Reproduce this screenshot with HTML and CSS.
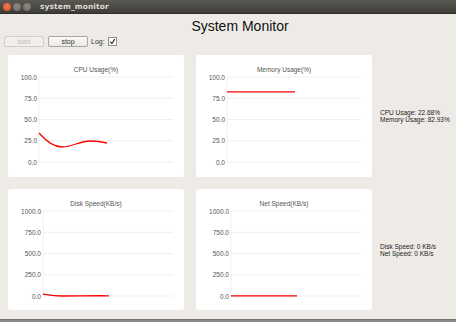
FILE: index.html
```html
<!DOCTYPE html>
<html lang="en">
<head>
    <meta charset="UTF-8">
    <title>system_monitor</title>
    <link rel="stylesheet" href="styles.css">
</head>
<body>
    <div class="window">
        <div class="titlebar">
            <span class="wbtn close"></span>
            <span class="wbtn"></span>
            <span class="wbtn"></span>
            <span class="wtitle">system_monitor</span>
        </div>

        <h1>System Monitor</h1>

        <div class="toolbar">
            <button class="btn" disabled>start</button>
            <button class="btn">stop</button>
            <span class="log">Log:</span>
            <span class="check">
                <svg width="7" height="7" viewBox="0 0 7 7"><path d="M1.3 3.6 L2.9 5.6 L5.8 1" fill="none" stroke="#222" stroke-width="1.1"/></svg>
            </span>
        </div>

        <div class="charts">
            <!-- cpu -->
            <div class="card">
                <svg width="176" height="122" viewBox="0 0 176 122">
                    <text class="ctitle" x="88" y="16.5">CPU Usage(%)</text>
                    <g class="grid">
                        <line x1="31" y1="22" x2="165" y2="22"/>
                        <line x1="31" y1="43.25" x2="165" y2="43.25"/>
                        <line x1="31" y1="64.5" x2="165" y2="64.5"/>
                        <line x1="31" y1="85.75" x2="165" y2="85.75"/>
                        <line x1="31" y1="107" x2="165" y2="107"/>
                        <line x1="31" y1="22" x2="31" y2="107"/>
                    </g>
                    <g class="ylab">
                        <text x="29" y="24.5">100.0</text>
                        <text x="29" y="45.75">75.0</text>
                        <text x="29" y="67">50.0</text>
                        <text x="29" y="88.25">25.0</text>
                        <text x="29" y="109.5">0.0</text>
                    </g>
                    <path class="series" d="M31 78 C38 86 46 92 54 92 C64 92 72 86 82 86 C90 86 95 87 99 88"/>
                </svg>
            </div>

            <!-- memory -->
            <div class="card">
                <svg width="176" height="122" viewBox="0 0 176 122">
                    <text class="ctitle" x="88" y="16.5">Memory Usage(%)</text>
                    <g class="grid">
                        <line x1="31" y1="22" x2="165" y2="22"/>
                        <line x1="31" y1="43.25" x2="165" y2="43.25"/>
                        <line x1="31" y1="64.5" x2="165" y2="64.5"/>
                        <line x1="31" y1="85.75" x2="165" y2="85.75"/>
                        <line x1="31" y1="107" x2="165" y2="107"/>
                        <line x1="31" y1="22" x2="31" y2="107"/>
                    </g>
                    <g class="ylab">
                        <text x="29" y="24.5">100.0</text>
                        <text x="29" y="45.75">75.0</text>
                        <text x="29" y="67">50.0</text>
                        <text x="29" y="88.25">25.0</text>
                        <text x="29" y="109.5">0.0</text>
                    </g>
                    <path class="series" d="M31 36.8 L99 36.8"/>
                </svg>
            </div>

            <div class="info">
                <div>CPU Usage: 22.68%</div>
                <div>Memory Usage: 82.93%</div>
            </div>

            <!-- disk -->
            <div class="card">
                <svg width="176" height="121" viewBox="0 0 176 121">
                    <text class="ctitle" x="88" y="16.5">Disk Speed(KB/s)</text>
                    <g class="grid">
                        <line x1="35" y1="22" x2="165" y2="22"/>
                        <line x1="35" y1="43.25" x2="165" y2="43.25"/>
                        <line x1="35" y1="64.5" x2="165" y2="64.5"/>
                        <line x1="35" y1="85.75" x2="165" y2="85.75"/>
                        <line x1="35" y1="107" x2="165" y2="107"/>
                        <line x1="35" y1="22" x2="35" y2="107"/>
                    </g>
                    <g class="ylab">
                        <text x="33" y="24.5">1000.0</text>
                        <text x="33" y="45.75">750.0</text>
                        <text x="33" y="67">500.0</text>
                        <text x="33" y="88.25">250.0</text>
                        <text x="33" y="109.5">0.0</text>
                    </g>
                    <path class="series" d="M35 105 C41 106 46 107 54 107 C70 107 85 106.6 101 106.8"/>
                </svg>
            </div>

            <!-- net -->
            <div class="card">
                <svg width="176" height="121" viewBox="0 0 176 121">
                    <text class="ctitle" x="88" y="16.5">Net Speed(KB/s)</text>
                    <g class="grid">
                        <line x1="35" y1="22" x2="165" y2="22"/>
                        <line x1="35" y1="43.25" x2="165" y2="43.25"/>
                        <line x1="35" y1="64.5" x2="165" y2="64.5"/>
                        <line x1="35" y1="85.75" x2="165" y2="85.75"/>
                        <line x1="35" y1="107" x2="165" y2="107"/>
                        <line x1="35" y1="22" x2="35" y2="107"/>
                    </g>
                    <g class="ylab">
                        <text x="33" y="24.5">1000.0</text>
                        <text x="33" y="45.75">750.0</text>
                        <text x="33" y="67">500.0</text>
                        <text x="33" y="88.25">250.0</text>
                        <text x="33" y="109.5">0.0</text>
                    </g>
                    <path class="series" d="M35 106.8 L101 106.8"/>
                </svg>
            </div>

            <div class="info">
                <div>Disk Speed: 0 KB/s</div>
                <div>Net Speed: 0 KB/s</div>
            </div>
        </div>
    </div>
</body>
</html>
```

FILE: styles.css
```css
html, body {
    margin: 0;
    padding: 0;
    background: #8c8a86;
    font-family: 'Liberation Sans', Arial, sans-serif;
    color: #333;
    overflow: hidden;
}
.window {
    background: #eeebe7;
    width: 456px;
    height: 319px;
    border-bottom: 1px solid #77756f;
}
.titlebar {
    height: 14px;
    display: flex;
    align-items: center;
    padding-left: 3px;
    gap: 2px;
    background: linear-gradient(#5a5852, #3d3c38);
    border-bottom: 1px solid #2f2e2b;
    box-sizing: border-box;
}
.wbtn {
    width: 8px;
    height: 8px;
    border-radius: 50%;
    background: radial-gradient(circle at 50% 40%, #8e8b85, #6a6862);
}
.wbtn.close {
    background: radial-gradient(circle at 50% 40%, #f37a55, #d8471f);
}
.wtitle {
    margin-left: 7px;
    font-family: 'DejaVu Sans', sans-serif;
    font-weight: bold;
    font-size: 7.5px;
    color: #dedbd5;
    letter-spacing: 0.1px;
}
h1 {
    margin: 4px 0 0;
    padding-left: 24px;
    text-align: center;
    font-size: 14px;
    line-height: 16px;
    font-weight: normal;
    color: #111;
}
.toolbar {
    display: flex;
    align-items: center;
    margin-top: 2px;
    padding-left: 4px;
    height: 11px;
    font-size: 7px;
}
.btn {
    width: 40px;
    height: 11px;
    margin: 0 4px 0 0;
    padding: 0;
    font-family: inherit;
    font-size: 7px;
    color: #333;
    background: linear-gradient(#fbfaf9, #ebe8e5);
    border: 1px solid #a9a6a1;
    border-radius: 2px;
}
.btn:disabled {
    color: #c2bfbb;
    background: #f1efed;
    border-color: #d3d0cc;
}
.log {
    margin-left: -1px;
    color: #333;
}
.check {
    width: 7px;
    height: 7px;
    margin-left: 3px;
    background: #fff;
    border: 1px solid #96938e;
    display: flex;
}
.charts {
    display: grid;
    grid-template-columns: 176px 176px auto;
    grid-template-rows: 122px 121px;
    column-gap: 12px;
    row-gap: 12px;
    margin-top: 8px;
    padding-left: 8px;
}
.card {
    background: #fff;
    border-radius: 3px;
}
.card svg {
    display: block;
}
.ctitle {
    font-size: 6.5px;
    fill: #555;
    text-anchor: middle;
}
.grid line {
    stroke: #ebebeb;
    stroke-width: 0.8;
}
.ylab text {
    font-size: 6.5px;
    fill: #555;
    text-anchor: end;
}
.series {
    fill: none;
    stroke: #ff0000;
    stroke-width: 1.3;
}
.info {
    align-self: center;
    margin-left: -4px;
    font-size: 6.5px;
    line-height: 7px;
    color: #222;
}
```
